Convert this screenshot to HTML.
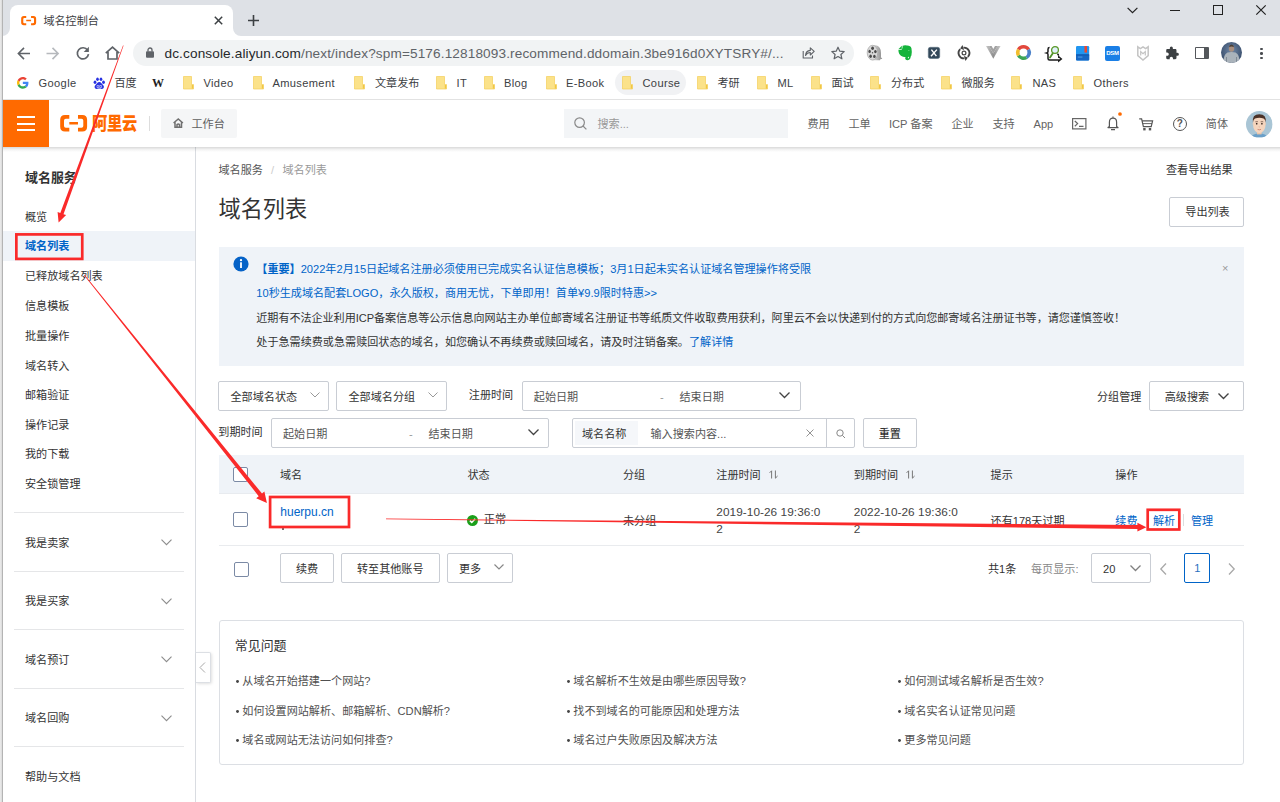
<!DOCTYPE html>
<html lang="zh-CN">
<head>
<meta charset="utf-8">
<title>域名控制台</title>
<style>
*{box-sizing:border-box;margin:0;padding:0}
html,body{width:1280px;height:802px;overflow:hidden;background:#fff}
body{position:relative;font-family:"Liberation Sans","Noto Sans CJK SC",sans-serif;font-size:11.1px;color:#333;-webkit-font-smoothing:antialiased}
.a{position:absolute;white-space:nowrap}
.t{position:absolute;white-space:nowrap;line-height:16px;height:16px;margin-top:0.5px}
svg{position:absolute;overflow:visible}
/* chrome */
#tabstrip{left:0;top:0;width:1280px;height:36px;background:#dee1e6}
#tab{left:10px;top:5px;width:223px;height:31px;background:#fff;border-radius:8px 8px 0 0}
#toolbar{left:0;top:36px;width:1280px;height:34px;background:#fff}
#omni{left:133px;top:40px;width:721px;height:26px;border-radius:13px;background:#f1f3f4}
#bm{left:0;top:70px;width:1280px;height:30px;background:#fff;border-bottom:1px solid #e2e2e2}
.bk{font-size:11.1px;color:#3c4043;top:75px}
.bk2{color:#3c4043}
#leftstrip{left:0;top:0;width:3px;height:802px;background:linear-gradient(90deg,#ececec,#dadada);border-right:1px solid #b4b4b4}
/* site header */
#hdr{left:3px;top:100px;width:1277px;height:47px;background:#fff}
#hsh{left:3px;top:147px;width:1277px;height:5px;background:linear-gradient(rgba(0,0,0,.15),rgba(0,0,0,.05) 50%,rgba(0,0,0,0))}
#burger{left:3px;top:100px;width:46px;height:46.8px;background:#ff6a00}
.nav{top:115px;color:#333}
/* sidebar */
#side{left:3px;top:147px;width:193px;height:655px;border-right:1px solid #d9dce1}
.mi{left:25px;color:#333}
.sep{left:14px;width:170px;height:1px;background:#e5e6e8}
/* content */
.inp{border:1px solid #c9cdd4;border-radius:2px;background:#fff}
.btn{border:1px solid #c9cdd4;border-radius:2px;background:#fff;text-align:center;color:#333}
.ph{color:#555}
.th{top:466px;color:#333}
.blue{color:#0064c8}
.faq{color:#505050}
.dt{font-size:11.8px;letter-spacing:0.06px;color:#444}
.cb{width:15px;height:15px;border:1px solid #7b8aa5;border-radius:2px;background:#fff}
</style>
</head>
<body>
<!-- ===== browser chrome ===== -->
<div class="a" id="tabstrip"></div>
<div class="a" id="tab"></div>
<div class="a" id="toolbar"></div>
<div class="a" id="omni"></div>
<div class="a" id="bm"></div>
<!--CHROME-->
<svg style="left:2px;top:28px" width="8" height="8" viewBox="0 0 8 8"><path d="M0 8H8V0A8 8 0 0 1 0 8Z" fill="#fff"/></svg>
<svg style="left:233px;top:28px" width="8" height="8" viewBox="0 0 8 8"><path d="M8 8H0V0A8 8 0 0 0 8 8Z" fill="#fff"/></svg>
<svg style="left:21px;top:15.8px" width="15.3" height="9.2" viewBox="0 0 31 19"><path d="M10.5 0H5.5Q0 0 0 5.5V13.5Q0 19 5.500000 19H10.5V14.8H6.5Q4.4 14.8 4.4 12.8V6.2Q4.4 4.2 6.5 4.2H10.5ZM20.5 0H25.5Q31 0 31 5.500000V13.5Q31 19 25.500000 19H20.5V14.8H24.5Q26.6 14.8 26.6 12.8V6.2Q26.6 4.2 24.5 4.2H20.5ZM10.500000 8H20.500000V11H10.500000Z" fill="#ff6a00"/></svg>
<div class="t " style="left:43.4px;top:12.6px;color:#3c4043">域名控制台</div>
<svg style="left:214px;top:16px" width="9" height="9" viewBox="0 0 9 9"><path d="M0.8 0.8L8.2 8.2M8.2 0.8L0.8 8.2" stroke="#3c4043" stroke-width="1.5" fill="none"/></svg>
<svg style="left:248px;top:14.5px" width="11" height="11" viewBox="0 0 11 11"><path d="M5.5 0V11M0 5.5H11" stroke="#3c4043" stroke-width="1.6" fill="none"/></svg>
<svg style="left:1127px;top:7px" width="11" height="7" viewBox="0 0 11 7"><path d="M0.6 0.8L5.5 5.700000L10.4 0.8" fill="none" stroke="#222" stroke-width="1.2"/></svg>
<div class="a" style="left:1170px;top:9.5px;width:10px;height:1px;background:#222"></div>
<div class="a" style="left:1213px;top:4.7px;width:10px;height:10.2px;border:1.1px solid #222"></div>
<svg style="left:1255.5px;top:5px" width="10" height="10" viewBox="0 0 10 10"><path d="M0.3 0.3L9.7 9.700000M9.700000 0.3L0.3 9.700000" stroke="#222" stroke-width="1.2" fill="none"/></svg>
<svg style="left:16.5px;top:46.5px" width="13.5" height="13" viewBox="0 0 13.5 13"><path d="M13 6.5H1.8M7 0.9L1.4 6.5L7 12.1" fill="none" stroke="#5f6368" stroke-width="1.6"/></svg>
<svg style="left:46px;top:46.5px" width="13.5" height="13" viewBox="0 0 13.5 13"><path d="M0.5 6.5H11.7M6.5 0.9L12.1 6.5L6.5 12.1" fill="none" stroke="#b6b9bd" stroke-width="1.6"/></svg>
<svg style="left:76px;top:46px" width="14" height="14" viewBox="0 0 14 14"><path d="M11.6 4.2A5.6 5.6 0 1 0 12.5 8.2" fill="none" stroke="#5f6368" stroke-width="1.7"/><path d="M12.9 0.8V6H7.7Z" fill="#5f6368"/></svg>
<svg style="left:104.5px;top:45.5px" width="15" height="14" viewBox="0 0 15 14"><path d="M0.8 7.2L7.5 1.2L14.2 7.2M3 6V13H12V6" fill="none" stroke="#5f6368" stroke-width="1.7"/></svg>
<svg style="left:145.5px;top:47px" width="8" height="11" viewBox="0 0 8 11"><rect x="0" y="4.3" width="8" height="6.5" rx="1" fill="#5f6368"/><path d="M2 4.5V3A2 2 0 0 1 6 3V4.5" fill="none" stroke="#5f6368" stroke-width="1.3"/></svg>
<div class="t" style="left:164.5px;top:45.1px;font-size:13.6px;color:#26282b;letter-spacing:0.13px" id="url">dc.console.aliyun.com<span style="color:#5f6368">/next/index?spm=5176.12818093.recommend.ddomain.3be916d0XYTSRY#/...</span></div>
<svg style="left:801px;top:46px" width="14" height="13" viewBox="0 0 14 13"><path d="M2.2 5V12H11.5V9.5M4.5 9.5C4.8 6.3 6.6 4.6 9.3 4.4V1.8L13.2 5.4L9.3 9V6.5C7.2 6.5 5.6 7.4 4.5 9.5Z" fill="none" stroke="#5f6368" stroke-width="1.1" stroke-linejoin="round"/></svg>
<svg style="left:830.5px;top:45.5px" width="14" height="14" viewBox="0 0 14 14"><path d="M7 1.2L8.8 5.2L13.2 5.6L9.9 8.5L10.9 12.8L7 10.5L3.1 12.8L4.1 8.5L0.8 5.6L5.2 5.2Z" fill="none" stroke="#5f6368" stroke-width="1.2" stroke-linejoin="round"/></svg>
<svg style="left:866.8px;top:45.2px" width="15.5" height="15.5" viewBox="0 0 15.5 15.5"><defs><linearGradient id="rg" x1="0" x2="1"><stop offset="0" stop-color="#e4e4e4"/><stop offset="1" stop-color="#8a8a8a"/></linearGradient></defs><path d="M5.4 0.2H8.6Q14 1.2 14 8V12.2L15.3 14H13.6L13 15.2H5.4Z" fill="url(#rg)"/><ellipse cx="5.5" cy="7.7" rx="5.3" ry="7.4" fill="#d9d9d9" stroke="#9b9b9b" stroke-width="0.6"/><ellipse cx="5.6" cy="3.3" rx="1.4" ry="1.7" fill="#4a4a4a"/><ellipse cx="2.6" cy="6.4" rx="1.2" ry="1.7" fill="#4a4a4a"/><ellipse cx="8.4" cy="6.6" rx="1.3" ry="1.7" fill="#4a4a4a"/><ellipse cx="3.6" cy="11.2" rx="1.3" ry="1.7" fill="#4a4a4a"/><ellipse cx="7.4" cy="11.4" rx="1.3" ry="1.7" fill="#4a4a4a"/><circle cx="5.5" cy="7.8" r="0.7" fill="#555"/></svg>
<svg style="left:897.5px;top:45.2px" width="14" height="15.2" viewBox="0 0 14 15.2"><path d="M4.600000 0.8Q7 -0.3 9 0.6Q12.600000 0.5 13.5 3.4Q14.2 7 13.4 10.4Q12.8 12 11.4 11.8Q8 12.6 5 11.8Q0.2 10.2 0.4 4.700000Q1.8 4.9 3.9 4.6Q4.8 2.600000 4.600000 0.8Z" fill="#14b43b"/><path d="M0.600000 4L3.9 0.8L3.7 4Z" fill="#14b43b"/><path d="M11.8 10.5Q12.2 14.3 9.5 14.4Q7.700000 14.3 8 13Q8.3 12.3 9.3 12.7" fill="none" stroke="#14b43b" stroke-width="1.6" stroke-linecap="round"/><path d="M10 5.600000Q11 5 11.600000 5.9Q10.8 5.700000 10 5.600000Z" fill="#d8f5df"/></svg>
<svg style="left:928.4px;top:46.8px" width="12" height="11.8" viewBox="0 0 12 11.8"><rect x="0.3" y="0.3" width="11.4" height="11.2" rx="2" fill="#33485a" stroke="#5a7080" stroke-width="0.6"/><path d="M3.4 2.6L8.4 9.2M8.9 2.6L3 9.2" stroke="#fff" stroke-width="1.4" fill="none"/></svg>
<svg style="left:957px;top:45.8px" width="14" height="14" viewBox="0 0 14 14"><path d="M3.18 3.18A5.4 5.4 0 0 0 7.47 12.38M10.82 10.82A5.4 5.4 0 0 0 6.53 1.62" fill="none" stroke="#454545" stroke-width="1.9"/><path d="M10.93 11.40L8.50 14.92L6.90 9.98ZM3.07 2.60L5.50 -0.92L7.10 4.02Z" fill="#454545"/><circle cx="7" cy="7" r="1.9" fill="none" stroke="#454545" stroke-width="1.2"/></svg>
<svg style="left:986.3px;top:46.1px" width="14.6" height="12.7" viewBox="0 0 14.6 12.7"><defs><linearGradient id="vg" x1="0" x2="1"><stop offset="0" stop-color="#c9c9c9"/><stop offset="0.5" stop-color="#8f8f8f"/><stop offset="1" stop-color="#c9c9c9"/></linearGradient></defs><path d="M0 0H3L7.3 7.4L11.6 0H14.6L7.3 12.7Z" fill="url(#vg)"/><path d="M3 0H5.6L7.3 2.900000L9 0H11.6L7.3 7.4Z" fill="#a2a2a2"/></svg>
<svg style="left:1016.1px;top:45.3px" width="15" height="15" viewBox="0 0 15 15"><path d="M7.5 7.5L1.00 3.75A7.5 7.5 0 0 1 14.00 3.75Z" fill="#e2483d"/><path d="M7.5 7.5L14.00 3.75A7.5 7.5 0 0 1 11.25 14.00Z" fill="#4a80c8"/><path d="M7.5 7.5L11.25 14.00A7.5 7.5 0 0 1 1.00 11.25Z" fill="#3da556"/><path d="M7.5 7.5L1.00 11.25A7.5 7.5 0 0 1 1.00 3.75Z" fill="#f2bd2c"/><circle cx="7.5" cy="7.5" r="3.9" fill="#fff"/></svg>
<svg style="left:1045.5px;top:45.5px" width="15.5" height="15" viewBox="0 0 15.5 15"><path d="M3.6 1.6Q2 1.6 2 3.2V5.4Q2 6.6 0.6 7Q2 7.4 2 8.6V12.4Q2 13.9 3.600000 13.9H12.8V15L15.3 12.9L12.8 10.8V11.900000" fill="none" stroke="#1c1c1c" stroke-width="1.5"/><path d="M12.4 9.6Q12.6 8.2 11.2 8" fill="none" stroke="#1c1c1c" stroke-width="1.5"/><path d="M7 7L4 11.600000" stroke="#4f8f2a" stroke-width="1.8" stroke-linecap="round"/><circle cx="9" cy="4" r="3.4" fill="#dff0fb" stroke="#5c9a2a" stroke-width="1.3"/></svg>
<svg style="left:1076.3px;top:45.6px" width="13.2" height="14.4" viewBox="0 0 13.2 14.4"><rect width="13.2" height="14.4" rx="1.2" fill="#2196f0"/><rect x="0" y="8.4" width="13.2" height="6" rx="1" fill="#1767c4"/><rect x="0" y="8.4" width="13.2" height="1" fill="#0f55ad"/><rect x="8.5" y="0" width="2.5" height="6.600000" fill="#f0452c"/><rect x="1.8" y="10.6" width="4.6" height="0.9" fill="#5aa5ea"/></svg>
<div class="a" style="left:1105px;top:45.5px;width:15px;height:15px;border-radius:2px;background:#1a7fe6;color:#fff;font-size:6px;font-weight:bold;line-height:15px;text-align:center;letter-spacing:-0.3px">DSM</div>
<svg style="left:1136.5px;top:45.5px" width="12" height="15" viewBox="0 0 12 15"><path d="M0.8 0.8L3.4 2.6L6 0.8L8.6 2.6L11.2 0.8V9.6L6 14L0.8 9.6Z" fill="none" stroke="#c4c4c4" stroke-width="1.5"/><path d="M3.7 9.5V5.5L6 7.6L8.3 5.5V9.5" fill="none" stroke="#c4c4c4" stroke-width="1.2"/></svg>
<svg style="left:1165px;top:45.5px" width="14.5" height="14.5" viewBox="0 0 24 24"><path d="M20.5 11H19V7c0-1.1-.9-2-2-2h-4V3.500000a2.500000 2.500000 0 0 0-5 0V5H4c-1.100000 0-1.990000.900000-1.990000 2v3.800000H3.500000c1.490000 0 2.700000 1.210000 2.700000 2.700000s-1.210000 2.700000-2.700000 2.700000H2V20c0 1.100000.900000 2 2 2h3.800000v-1.500000c0-1.490000 1.210000-2.700000 2.700000-2.700000 1.490000 0 2.700000 1.210000 2.700000 2.700000V22H17c1.100000 0 2-.900000 2-2v-4h1.500000a2.500000 2.500000 0 0 0 0-5z" fill="#3c4043"/></svg>
<div class="a" style="left:1195px;top:46.5px;width:13.5px;height:12.5px;border:1.6px solid #54575b;border-right-width:5px;border-radius:1px"></div>
<svg style="left:1221px;top:42.3px" width="21" height="21" viewBox="0 0 21 21"><defs><clipPath id="cav"><circle cx="10.5" cy="10.5" r="10.5"/></clipPath><radialGradient id="cbg" cx="0.5" cy="0.4" r="0.7"><stop offset="0" stop-color="#6f87a6"/><stop offset="1" stop-color="#2f4360"/></radialGradient></defs><g clip-path="url(#cav)"><rect width="21" height="21" fill="url(#cbg)"/><path d="M2.5 21Q2 13 6.500000 10.6Q10.5 9.2 14.5 10.600000Q19 13 18.5 21Z" fill="#aab3bb"/><path d="M5.5 21V15M15.5 21V15" stroke="#7f8a95" stroke-width="1"/><ellipse cx="10.5" cy="6.4" rx="2.7" ry="3.3" fill="#a98f7f"/><path d="M8 5.2Q8.2 2.6 10.500000 2.600000Q12.8 2.600000 13 5.200000Q10.500000 4 8 5.200000Z" fill="#4a4038"/></g></svg>
<div class="a" style="left:1260.3px;top:47.5px;width:2.7px;height:2.7px;border-radius:50%;background:#4a4d51"></div>
<div class="a" style="left:1260.3px;top:52.1px;width:2.7px;height:2.7px;border-radius:50%;background:#4a4d51"></div>
<div class="a" style="left:1260.3px;top:56.7px;width:2.7px;height:2.7px;border-radius:50%;background:#4a4d51"></div>
<svg style="left:17.3px;top:77px" width="11.7" height="11.7" viewBox="0 0 48 48"><path fill="#EA4335" d="M24 9.500000c3.540000 0 6.710000 1.220000 9.210000 3.600000l6.850000-6.850000C35.900000 2.380000 30.470000 0 24 0 14.620000 0 6.510000 5.380000 2.560000 13.220000l7.980000 6.190000C12.430000 13.720000 17.740000 9.500000 24 9.500000z"/><path fill="#4285F4" d="M46.980000 24.550000c0-1.570000-.150000-3.090000-.380000-4.550000H24v9.020000h12.940000c-.580000 2.960000-2.260000 5.480000-4.780000 7.180000l7.730000 6c4.510000-4.180000 7.090000-10.360000 7.090000-17.650000z"/><path fill="#FBBC05" d="M10.530000 28.590000c-.480000-1.450000-.760000-2.990000-.760000-4.590000s.270000-3.140000.760000-4.590000l-7.980000-6.190000C.920000 16.460000 0 20.120000 0 24c0 3.880000.920000 7.540000 2.560000 10.780000l7.970000-6.190000z"/><path fill="#34A853" d="M24 48c6.480000 0 11.930000-2.130000 15.890000-5.810000l-7.730000-6c-2.150000 1.450000-4.920000 2.300000-8.160000 2.300000-6.260000 0-11.570000-4.220000-13.470000-9.910000l-7.980000 6.190000C6.510000 42.620000 14.620000 48 24 48z"/></svg>
<div class="t bk2" style="left:38.6px;top:74.8px;letter-spacing:0.35px">Google</div>
<svg style="left:93px;top:76.5px" width="12.5" height="12.5" viewBox="0 0 25 25"><ellipse cx="4" cy="10.500000" rx="2.800000" ry="3.600000" fill="#2932e1"/><ellipse cx="9" cy="4.500000" rx="2.700000" ry="3.600000" fill="#2932e1"/><ellipse cx="16" cy="4.500000" rx="2.700000" ry="3.600000" fill="#2932e1"/><ellipse cx="21" cy="10.500000" rx="2.800000" ry="3.600000" fill="#2932e1"/><path d="M12.500000 10C16 10 18 14 20.500000 16.500000C23 19 22 23.500000 18 23.800000C15.500000 24 14.500000 23 12.500000 23C10.500000 23 9.500000 24 7 23.800000C3 23.500000 2 19 4.500000 16.500000C7 14 9 10 12.500000 10Z" fill="#2932e1"/><path d="M8 17h3.500000v4H8zM13.500000 17h3.500000v4h-3.500000z" fill="none" stroke="#fff" stroke-width="1"/></svg>
<div class="t bk2" style="left:114.4px;top:74.8px;">百度</div>
<div class="t " style="left:152.0px;top:74.8px;font-family:'Liberation Serif',serif;font-weight:bold;font-size:12px;color:#222">W</div>
<div class="a" style="left:614.5px;top:70px;width:71.2px;height:25.2px;border-radius:12.6px;background:#f1f2f4"></div>
<svg style="left:183.0px;top:75.8px" width="11" height="13.5" viewBox="0 0 11 13.5"><path d="M0.5 0.5H8.5V8.5H10.5V13H0.5Z" fill="#fbe28a" stroke="#f3cf5a" stroke-width="0.7"/><rect x="8.8" y="9" width="1.4" height="3.6" fill="#f1c644"/></svg>
<div class="t bk2" style="left:203.5px;top:74.8px;letter-spacing:0.35px">Video</div>
<svg style="left:252.5px;top:75.8px" width="11" height="13.5" viewBox="0 0 11 13.5"><path d="M0.5 0.5H8.5V8.5H10.5V13H0.5Z" fill="#fbe28a" stroke="#f3cf5a" stroke-width="0.7"/><rect x="8.8" y="9" width="1.4" height="3.6" fill="#f1c644"/></svg>
<div class="t bk2" style="left:272.5px;top:74.8px;letter-spacing:0.35px">Amusement</div>
<svg style="left:354.0px;top:75.8px" width="11" height="13.5" viewBox="0 0 11 13.5"><path d="M0.5 0.5H8.5V8.5H10.5V13H0.5Z" fill="#fbe28a" stroke="#f3cf5a" stroke-width="0.7"/><rect x="8.8" y="9" width="1.4" height="3.6" fill="#f1c644"/></svg>
<div class="t bk2" style="left:375.0px;top:74.8px;">文章发布</div>
<svg style="left:436.0px;top:75.8px" width="11" height="13.5" viewBox="0 0 11 13.5"><path d="M0.5 0.5H8.5V8.5H10.5V13H0.5Z" fill="#fbe28a" stroke="#f3cf5a" stroke-width="0.7"/><rect x="8.8" y="9" width="1.4" height="3.6" fill="#f1c644"/></svg>
<div class="t bk2" style="left:456.5px;top:74.8px;letter-spacing:0.35px">IT</div>
<svg style="left:483.5px;top:75.8px" width="11" height="13.5" viewBox="0 0 11 13.5"><path d="M0.5 0.5H8.5V8.5H10.5V13H0.5Z" fill="#fbe28a" stroke="#f3cf5a" stroke-width="0.7"/><rect x="8.8" y="9" width="1.4" height="3.6" fill="#f1c644"/></svg>
<div class="t bk2" style="left:504.0px;top:74.8px;letter-spacing:0.35px">Blog</div>
<svg style="left:546.0px;top:75.8px" width="11" height="13.5" viewBox="0 0 11 13.5"><path d="M0.5 0.5H8.5V8.5H10.5V13H0.5Z" fill="#fbe28a" stroke="#f3cf5a" stroke-width="0.7"/><rect x="8.8" y="9" width="1.4" height="3.6" fill="#f1c644"/></svg>
<div class="t bk2" style="left:566.0px;top:74.8px;letter-spacing:0.35px">E-Book</div>
<svg style="left:621.5px;top:75.8px" width="11" height="13.5" viewBox="0 0 11 13.5"><path d="M0.5 0.5H8.5V8.5H10.5V13H0.5Z" fill="#fbe28a" stroke="#f3cf5a" stroke-width="0.7"/><rect x="8.8" y="9" width="1.4" height="3.6" fill="#f1c644"/></svg>
<div class="t bk2" style="left:642.5px;top:74.8px;letter-spacing:0.35px">Course</div>
<svg style="left:696.5px;top:75.8px" width="11" height="13.5" viewBox="0 0 11 13.5"><path d="M0.5 0.5H8.5V8.5H10.5V13H0.5Z" fill="#fbe28a" stroke="#f3cf5a" stroke-width="0.7"/><rect x="8.8" y="9" width="1.4" height="3.6" fill="#f1c644"/></svg>
<div class="t bk2" style="left:717.5px;top:74.8px;">考研</div>
<svg style="left:756.5px;top:75.8px" width="11" height="13.5" viewBox="0 0 11 13.5"><path d="M0.5 0.5H8.5V8.5H10.5V13H0.5Z" fill="#fbe28a" stroke="#f3cf5a" stroke-width="0.7"/><rect x="8.8" y="9" width="1.4" height="3.6" fill="#f1c644"/></svg>
<div class="t bk2" style="left:777.5px;top:74.8px;letter-spacing:0.35px">ML</div>
<svg style="left:811.0px;top:75.8px" width="11" height="13.5" viewBox="0 0 11 13.5"><path d="M0.5 0.5H8.5V8.5H10.5V13H0.5Z" fill="#fbe28a" stroke="#f3cf5a" stroke-width="0.7"/><rect x="8.8" y="9" width="1.4" height="3.6" fill="#f1c644"/></svg>
<div class="t bk2" style="left:831.5px;top:74.8px;">面试</div>
<svg style="left:870.0px;top:75.8px" width="11" height="13.5" viewBox="0 0 11 13.5"><path d="M0.5 0.5H8.5V8.5H10.5V13H0.5Z" fill="#fbe28a" stroke="#f3cf5a" stroke-width="0.7"/><rect x="8.8" y="9" width="1.4" height="3.6" fill="#f1c644"/></svg>
<div class="t bk2" style="left:891.0px;top:74.8px;">分布式</div>
<svg style="left:941.0px;top:75.8px" width="11" height="13.5" viewBox="0 0 11 13.5"><path d="M0.5 0.5H8.5V8.5H10.5V13H0.5Z" fill="#fbe28a" stroke="#f3cf5a" stroke-width="0.7"/><rect x="8.8" y="9" width="1.4" height="3.6" fill="#f1c644"/></svg>
<div class="t bk2" style="left:961.5px;top:74.8px;">微服务</div>
<svg style="left:1011.0px;top:75.8px" width="11" height="13.5" viewBox="0 0 11 13.5"><path d="M0.5 0.5H8.5V8.5H10.5V13H0.5Z" fill="#fbe28a" stroke="#f3cf5a" stroke-width="0.7"/><rect x="8.8" y="9" width="1.4" height="3.6" fill="#f1c644"/></svg>
<div class="t bk2" style="left:1032.5px;top:74.8px;letter-spacing:0.35px">NAS</div>
<svg style="left:1072.5px;top:75.8px" width="11" height="13.5" viewBox="0 0 11 13.5"><path d="M0.5 0.5H8.5V8.5H10.5V13H0.5Z" fill="#fbe28a" stroke="#f3cf5a" stroke-width="0.7"/><rect x="8.8" y="9" width="1.4" height="3.6" fill="#f1c644"/></svg>
<div class="t bk2" style="left:1093.5px;top:74.8px;letter-spacing:0.35px">Others</div>
<!--/CHROME-->
<!-- ===== site header ===== -->
<div class="a" id="hdr"></div>
<div class="a" id="burger"></div>
<!--HEADER-->
<div class="a" style="left:16.8px;top:116.1px;width:18.5px;height:1.9px;background:#fff"></div>
<div class="a" style="left:16.8px;top:122.7px;width:18.5px;height:1.9px;background:#fff"></div>
<div class="a" style="left:16.8px;top:129.2px;width:18.5px;height:1.9px;background:#fff"></div>
<svg style="left:60.2px;top:115.2px" width="27.3" height="16.5" viewBox="0 0 31 19"><path d="M10.5 0H5.5Q0 0 0 5.5V13.5Q0 19 5.500000 19H10.5V14.8H6.5Q4.4 14.8 4.4 12.8V6.2Q4.4 4.2 6.5 4.2H10.5ZM20.5 0H25.5Q31 0 31 5.500000V13.5Q31 19 25.500000 19H20.5V14.8H24.5Q26.6 14.8 26.6 12.8V6.2Q26.6 4.2 24.5 4.2H20.5ZM10.500000 8H20.500000V11H10.500000Z" fill="#ff6a00"/></svg>
<div class="a" style="left:92px;top:110.4px;font-size:15.2px;font-weight:900;line-height:24px;color:#ff6a00;letter-spacing:-0.2px;font-family:'Noto Sans CJK SC',sans-serif;transform:scaleY(1.17);transform-origin:50% 50%">阿里云</div>
<div class="a" style="left:149px;top:116px;width:1px;height:15px;background:#ddd"></div>
<div class="a" style="left:161px;top:109px;width:76px;height:29px;background:#f5f6f7;border-radius:2px"></div>
<svg style="left:172.5px;top:118px" width="10.5" height="10" viewBox="0 0 10.5 10"><path d="M0.6 5L5.25 0.9L9.9 5M2 4.2V9.3H8.5V4.2M4 9.3V6.600000Q5.25 5.4 6.5 6.600000V9.3" fill="none" stroke="#707070" stroke-width="1.5"/></svg>
<div class="t " style="left:191.5px;top:115.0px;color:#606060">工作台</div>
<div class="a" style="left:564px;top:109px;width:223.5px;height:29px;background:#f3f5f7"></div>
<svg style="left:574px;top:117px" width="13" height="13" viewBox="0 0 13 13"><circle cx="5.600000" cy="5.600000" r="4.8" fill="none" stroke="#8a8a8a" stroke-width="1.2"/><path d="M9 9L12.4 12.4" stroke="#8a8a8a" stroke-width="1.2"/></svg>
<div class="t " style="left:597.5px;top:115.0px;color:#999">搜索...</div>
<div class="t " style="left:807.5px;top:115.0px;color:#636363">费用</div>
<div class="t " style="left:848.5px;top:115.0px;color:#636363">工单</div>
<div class="t " style="left:889.0px;top:115.0px;color:#636363">ICP 备案</div>
<div class="t " style="left:951.5px;top:115.0px;color:#636363">企业</div>
<div class="t " style="left:992.5px;top:115.0px;color:#636363">支持</div>
<div class="t " style="left:1033.5px;top:115.0px;color:#636363">App</div>
<div class="t " style="left:1205.8px;top:115.0px;color:#636363">简体</div>
<svg style="left:1072px;top:118px" width="14.5" height="11.5" viewBox="0 0 14.5 11.5"><rect x="0.6" y="0.6" width="13.3" height="10.3" fill="none" stroke="#666" stroke-width="1.2"/><path d="M2.8 3L5.6 5.600000L2.8 8.2M7 8.4H11.5" fill="none" stroke="#666" stroke-width="1.2"/></svg>
<svg style="left:1107px;top:116.3px" width="12" height="14.5" viewBox="0 0 12 14.5"><path d="M6 0.6V2M2.4 10.6V6.2Q2.4 2.2 6 2.2Q9.6 2.2 9.6 6.2V10.6L11 11.6H1ZM4 13.6H8" fill="none" stroke="#555" stroke-width="1.2" stroke-linejoin="round"/></svg>
<svg style="left:1118px;top:111.500000px" width="4" height="4" viewBox="0 0 4 4"><circle cx="2" cy="2" r="1.85" fill="#ff6a00"/></svg>
<svg style="left:1139px;top:117.6px" width="14.5" height="13" viewBox="0 0 14.5 13"><path d="M0.2 0.8H2.6L4.4 8.6H12.2L13.600000 2.8H3.2" fill="none" stroke="#555" stroke-width="1.2"/><path d="M4 5.6H13" stroke="#555" stroke-width="0.9"/><rect x="4.2" y="10" width="2.4" height="2.4" fill="#555"/><rect x="9.8" y="10" width="2.4" height="2.4" fill="#555"/></svg>
<div class="a" style="left:1172.8px;top:116.800000px;width:14px;height:14px;border-radius:50%;border:1.2px solid #555;text-align:center;line-height:11.600000px;font-size:10px;font-weight:bold;color:#555">?</div>
<svg style="left:1246.3px;top:111px" width="26.6" height="26.6" viewBox="0 0 26.6 26.6"><defs><clipPath id="avc"><circle cx="13.3" cy="13.3" r="13.3"/></clipPath></defs><g clip-path="url(#avc)"><rect width="26.6" height="26.6" fill="#a9c5d5"/><path d="M5 26.6Q6.500000 22.6 13.3 22.6Q20 22.6 21.600000 26.6Z" fill="#6a9fc8"/><rect x="11" y="19" width="4.600000" height="4.4" fill="#ebc5a8"/><path d="M6.8 11.5Q6.2 13.8 7.4 14.6L7.4 11.5ZM19.8 11.5Q20.4 13.8 19.2 14.600000L19.2 11.500000Z" fill="#ebc5a8"/><path d="M7.2 10Q7.2 4.6 13.3 4.600000Q19.4 4.600000 19.4 10V14.5Q19.4 18.5 16.2 21Q13.3 22.8 10.4 21Q7.2 18.500000 7.2 14.500000Z" fill="#f5d5be"/><path d="M6.9 11.6Q5.8 3.2 13.3 3.2Q20.8 3.2 19.7 11.600000Q19.4 8.4 17.600000 7.4Q13.3 6.2 9 7.400000Q7.2 8.400000 6.900000 11.600000Z" fill="#4b3228"/><ellipse cx="10.7" cy="12.7" rx="0.8" ry="0.9" fill="#3a2a22"/><ellipse cx="15.9" cy="12.7" rx="0.800000" ry="0.900000" fill="#3a2a22"/><path d="M9.3 10.8Q10.7 10.2 12 10.800000M14.600000 10.800000Q15.9 10.200000 17.3 10.800000" fill="none" stroke="#5a4035" stroke-width="0.6"/><path d="M12.8 15.8Q13.3 16.2 13.8 15.800000" fill="none" stroke="#c99a82" stroke-width="0.6"/><path d="M11.600000 18.4Q13.3 19.2 15 18.400000" fill="none" stroke="#c0705f" stroke-width="0.7"/></g></svg>
<!--/HEADER-->
<!-- ===== sidebar ===== -->
<div class="a" id="side"></div>
<!--SIDEBAR-->
<div class="a" style="left:3px;top:231px;width:192px;height:30px;background:#eff3f8"></div>
<div class="t" style="left:25px;top:169.5px;font-size:12.95px;font-weight:bold;color:#333">域名服务</div>
<div class="t mi" style="top:208.0px">概览</div>
<div class="t mi" style="top:237.8px;font-weight:bold;color:#0064c8">域名列表</div>
<div class="t mi" style="top:267.6px">已释放域名列表</div>
<div class="t mi" style="top:297.8px">信息模板</div>
<div class="t mi" style="top:327.4px">批量操作</div>
<div class="t mi" style="top:357.0px">域名转入</div>
<div class="t mi" style="top:386.6px">邮箱验证</div>
<div class="t mi" style="top:416.2px">操作记录</div>
<div class="t mi" style="top:445.8px">我的下载</div>
<div class="t mi" style="top:475.4px">安全锁管理</div>
<div class="a sep" style="top:511.5px"></div>
<div class="a sep" style="top:570.5px"></div>
<div class="a sep" style="top:628.9px"></div>
<div class="a sep" style="top:687.5px"></div>
<div class="a sep" style="top:745.8px"></div>
<div class="t mi" style="top:534.2px">我是卖家</div>
<svg style="left:161px;top:539.2px" width="11" height="7" viewBox="0 0 11 7"><path d="M0.5 0.7 L5.5 5.7 L10.5 0.7" fill="none" stroke="#8c8c8c" stroke-width="1.1"/></svg>
<div class="t mi" style="top:592.5px">我是买家</div>
<svg style="left:161px;top:597.5px" width="11" height="7" viewBox="0 0 11 7"><path d="M0.5 0.7 L5.5 5.7 L10.5 0.7" fill="none" stroke="#8c8c8c" stroke-width="1.1"/></svg>
<div class="t mi" style="top:651.0px">域名预订</div>
<svg style="left:161px;top:656.0px" width="11" height="7" viewBox="0 0 11 7"><path d="M0.5 0.7 L5.5 5.7 L10.5 0.7" fill="none" stroke="#8c8c8c" stroke-width="1.1"/></svg>
<div class="t mi" style="top:709.8px">域名回购</div>
<svg style="left:161px;top:714.8px" width="11" height="7" viewBox="0 0 11 7"><path d="M0.5 0.7 L5.5 5.7 L10.5 0.7" fill="none" stroke="#8c8c8c" stroke-width="1.1"/></svg>
<div class="t mi" style="top:768.4px">帮助与文档</div>
<!--/SIDEBAR-->
<!-- ===== content ===== -->
<!--CONTENT-->
<div class="t " style="left:218.5px;top:161.5px;color:#555">域名服务</div>
<div class="t " style="left:271.0px;top:161.5px;color:#ccc">/</div>
<div class="t " style="left:282.5px;top:161.5px;color:#999">域名列表</div>
<div class="t " style="left:1166.0px;top:161.8px;color:#333">查看导出结果</div>
<div class="a" style="left:218.5px;top:193.8px;font-size:22.2px;line-height:32px;color:#333">域名列表</div>
<div class="a btn" style="left:1169px;top:197px;width:75px;height:30px;line-height:29.5px;padding-left:2px">导出列表</div>
<div class="a" style="left:218.5px;top:247.3px;width:1025.5px;height:118.6px;background:#eff3f8"></div>
<svg style="left:233px;top:256px" width="16" height="16" viewBox="0 0 16 16"><circle cx="8" cy="8" r="7.6" fill="#0562c7"/><circle cx="8" cy="4.2" r="1.15" fill="#fff"/><rect x="7.1" y="6.3" width="1.8" height="5.7" fill="#fff"/></svg>
<div class="t l1" style="left:256.3px;top:260.8px;color:#0064c8"><b>【重要】</b>2022年2月15日起域名注册必须使用已完成实名认证信息模板；3月1日起未实名认证域名管理操作将受限</div>
<div class="t l2" style="left:256.3px;top:284.5px;color:#0064c8">10秒生成域名配套LOGO，永久版权，商用无忧，下单即用！首单¥9.9限时特惠&gt;&gt;</div>
<div class="t l3" style="left:256.3px;top:309.0px;color:#333;letter-spacing:-0.05px">近期有不法企业利用ICP备案信息等公示信息向网站主办单位邮寄域名注册证书等纸质文件收取费用获利，阿里云不会以快递到付的方式向您邮寄域名注册证书等，请您谨慎签收！</div>
<div class="t l4" style="left:256.3px;top:333.2px;color:#333">处于急需续费或急需赎回状态的域名，如您确认不再续费或赎回域名，请及时注销备案。<span class="blue">了解详情</span></div>
<div class="t " style="left:1222.0px;top:259.3px;color:#999;font-size:11px">×</div>
<div class="a inp" style="left:218px;top:381px;width:111px;height:30px"></div>
<div class="t " style="left:230.5px;top:388.8px;">全部域名状态</div>
<svg style="left:310.0px;top:392.3px" width="10.0" height="6.0" viewBox="0 0 10.0 6.0"><path d="M0.5 0.5 L5.0 5.0 L9.5 0.5" fill="none" stroke="#999" stroke-width="1.0"/></svg>
<div class="a inp" style="left:336px;top:381px;width:111px;height:30px"></div>
<div class="t " style="left:348.5px;top:388.8px;">全部域名分组</div>
<svg style="left:428.0px;top:392.3px" width="10.0" height="6.0" viewBox="0 0 10.0 6.0"><path d="M0.5 0.5 L5.0 5.0 L9.5 0.5" fill="none" stroke="#999" stroke-width="1.0"/></svg>
<div class="t " style="left:468.8px;top:386.5px;">注册时间</div>
<div class="a inp" style="left:521.5px;top:381px;width:279px;height:30px"></div>
<div class="t ph" style="left:533.8px;top:388.8px;">起始日期</div>
<div class="t " style="left:660.0px;top:388.0px;color:#999">-</div>
<div class="t ph" style="left:679.5px;top:388.8px;">结束日期</div>
<svg style="left:778.5px;top:392.4px" width="11.0" height="6.5" viewBox="0 0 11.0 6.5"><path d="M0.5 0.5 L5.5 5.5 L10.5 0.5" fill="none" stroke="#444" stroke-width="1.3"/></svg>
<div class="t " style="left:1097.0px;top:388.5px;">分组管理</div>
<div class="a btn" style="left:1149px;top:381px;width:95px;height:30px"></div>
<div class="t " style="left:1164.7px;top:388.8px;">高级搜索</div>
<svg style="left:1217.5px;top:392.7px" width="11.0" height="6.5" viewBox="0 0 11.0 6.5"><path d="M0.5 0.5 L5.5 5.5 L10.5 0.5" fill="none" stroke="#444" stroke-width="1.4"/></svg>
<div class="t " style="left:218.3px;top:423.0px;">到期时间</div>
<div class="a inp" style="left:270.5px;top:418px;width:278.5px;height:30px"></div>
<div class="t ph" style="left:283.0px;top:425.8px;">起始日期</div>
<div class="t " style="left:409.0px;top:425.0px;color:#999">-</div>
<div class="t ph" style="left:428.5px;top:425.8px;">结束日期</div>
<svg style="left:528.0px;top:429.4px" width="11.0" height="6.5" viewBox="0 0 11.0 6.5"><path d="M0.5 0.5 L5.5 5.5 L10.5 0.5" fill="none" stroke="#444" stroke-width="1.3"/></svg>
<div class="a inp" style="left:572px;top:418px;width:283px;height:30px"></div>
<div class="a" style="left:575px;top:421px;width:62.5px;height:24px;background:#f5f7fa"></div>
<div class="t " style="left:582.0px;top:425.8px;">域名名称</div>
<div class="t ph" style="left:650.5px;top:425.8px;">输入搜索内容...</div>
<svg style="left:806px;top:429px" width="8" height="8" viewBox="0 0 8 8"><path d="M0.5 0.5L7.5 7.5M7.5 0.5L0.5 7.5" stroke="#888" stroke-width="0.9" fill="none"/></svg>
<div class="a" style="left:825.5px;top:418px;width:1px;height:30px;background:#c9cdd4"></div>
<svg style="left:835.5px;top:428.5px" width="10" height="10" viewBox="0 0 10 10"><circle cx="4" cy="4" r="3.2" fill="none" stroke="#888" stroke-width="1"/><path d="M6.4 6.4L9 9" stroke="#888" stroke-width="1"/></svg>
<div class="a btn" style="left:863px;top:418px;width:53.5px;height:30px;line-height:30px;font-weight:500;color:#333">重置</div>
<div class="a" style="left:218.5px;top:455px;width:1025.5px;height:38px;background:#eff3f8"></div>
<div class="a" style="left:218.5px;top:493px;width:1025.5px;height:1px;background:#e8ebef"></div>
<div class="a" style="left:218.5px;top:544.6px;width:1025.5px;height:1px;background:#e9ebee"></div>
<div class="a cb" style="left:233px;top:467px"></div>
<div class="a cb" style="left:233px;top:512px"></div>
<div class="a cb" style="left:234px;top:562px"></div>
<div class="t " style="left:280.0px;top:466.5px;">域名</div>
<div class="t " style="left:467.5px;top:466.5px;">状态</div>
<div class="t " style="left:623.0px;top:466.5px;">分组</div>
<div class="t " style="left:716.3px;top:466.5px;">注册时间</div>
<div class="t " style="left:853.8px;top:466.5px;">到期时间</div>
<div class="t " style="left:990.6px;top:466.5px;">提示</div>
<div class="t " style="left:1115.3px;top:466.5px;">操作</div>
<svg style="left:768.5px;top:470px" width="10" height="9" viewBox="0 0 10 9"><path d="M2.6 8.5V0.8L0.6 2.8M6.4 0.5V8.2L8.6 6" fill="none" stroke="#777" stroke-width="1"/></svg>
<svg style="left:905.5px;top:470px" width="10" height="9" viewBox="0 0 10 9"><path d="M2.6 8.5V0.8L0.6 2.8M6.4 0.5V8.2L8.6 6" fill="none" stroke="#777" stroke-width="1"/></svg>
<div class="t " style="left:280.3px;top:503.0px;color:#0064c8;font-size:12px">huerpu.cn</div>
<div class="a" style="left:282px;top:527.8px;width:2px;height:2px;background:#444;border-radius:1px"></div>
<svg style="left:467px;top:514.5px" width="11" height="11" viewBox="0 0 11 11"><circle cx="5.5" cy="5.5" r="5.5" fill="#1aa01a"/><path d="M2.9 5.6L4.8 7.4L8.2 3.8" fill="none" stroke="#fff" stroke-width="1.5"/></svg>
<div class="t " style="left:483.8px;top:510.7px;">正常</div>
<div class="t " style="left:623.0px;top:512.6px;">未分组</div>
<div class="t dt" style="left:716.3px;top:503.3px;">2019-10-26 19:36:0</div>
<div class="t dt" style="left:716.3px;top:520.8px;">2</div>
<div class="t dt" style="left:853.8px;top:503.3px;">2022-10-26 19:36:0</div>
<div class="t dt" style="left:853.8px;top:520.8px;">2</div>
<div class="t " style="left:990.6px;top:512.0px;">还有178天过期</div>
<div class="t blue" style="left:1115.3px;top:512.0px;">续费</div>
<div class="t blue" style="left:1153.0px;top:512.0px;">解析</div>
<div class="a" style="left:1183px;top:514px;width:1px;height:12px;background:#ddd"></div>
<div class="t blue" style="left:1191.0px;top:512.0px;">管理</div>
<div class="a btn" style="left:280px;top:553px;width:54px;height:30px;line-height:30px">续费</div>
<div class="a btn" style="left:341px;top:553px;width:98.5px;height:30px;line-height:30px">转至其他账号</div>
<div class="a btn" style="left:447px;top:553px;width:66px;height:30px"></div>
<div class="t " style="left:459.0px;top:560.7px;">更多</div>
<svg style="left:494.0px;top:564.3px" width="10.0" height="6.0" viewBox="0 0 10.0 6.0"><path d="M0.5 0.5 L5.0 5.0 L9.5 0.5" fill="none" stroke="#888" stroke-width="1.2"/></svg>
<div class="t " style="left:988.0px;top:560.8px;color:#333">共1条</div>
<div class="t " style="left:1031.0px;top:560.8px;color:#888">每页显示:</div>
<div class="a inp" style="left:1091px;top:553px;width:59.6px;height:29.6px"></div>
<div class="t " style="left:1103.0px;top:560.5px;">20</div>
<svg style="left:1129.5px;top:564.8px" width="11.0" height="6.5" viewBox="0 0 11.0 6.5"><path d="M0.5 0.5 L5.5 5.5 L10.5 0.5" fill="none" stroke="#808080" stroke-width="1.3"/></svg>
<svg style="left:1160px;top:562.5px" width="7" height="12" viewBox="0 0 7 12"><path d="M6 0.5L0.8 6L6 11.5" fill="none" stroke="#a8a8a8" stroke-width="1.3"/></svg>
<div class="a" style="left:1184.4px;top:553.3px;width:26px;height:29.6px;border:1px solid #0064c8;border-radius:2px;text-align:center;line-height:29px;color:#2a6fc0">1</div>
<svg style="left:1228px;top:562.5px" width="7" height="12" viewBox="0 0 7 12"><path d="M1 0.5L6.2 6L1 11.5" fill="none" stroke="#a8a8a8" stroke-width="1.3"/></svg>
<div class="a" style="left:218.5px;top:620px;width:1025.5px;height:145px;border:1px solid #dcdfe4;border-radius:3px;background:#fff"></div>
<div class="a" style="left:234.8px;top:636px;font-size:12.95px;line-height:20px;color:#333">常见问题</div>
<svg style="left:235.9px;top:680.0px" width="3" height="3" viewBox="0 0 3 3"><circle cx="1.5" cy="1.5" r="1.45" fill="#444"/></svg>
<div class="t faq" style="left:242.3px;top:672.4px;">从域名开始搭建一个网站?</div>
<svg style="left:235.9px;top:709.7px" width="3" height="3" viewBox="0 0 3 3"><circle cx="1.5" cy="1.5" r="1.45" fill="#444"/></svg>
<div class="t faq" style="left:242.3px;top:702.1px;">如何设置网站解析、邮箱解析、CDN解析?</div>
<svg style="left:235.9px;top:739.4px" width="3" height="3" viewBox="0 0 3 3"><circle cx="1.5" cy="1.5" r="1.45" fill="#444"/></svg>
<div class="t faq" style="left:242.3px;top:731.8px;">域名或网站无法访问如何排查?</div>
<svg style="left:566.9px;top:680.0px" width="3" height="3" viewBox="0 0 3 3"><circle cx="1.5" cy="1.5" r="1.45" fill="#444"/></svg>
<div class="t faq" style="left:573.3px;top:672.4px;">域名解析不生效是由哪些原因导致?</div>
<svg style="left:566.9px;top:709.7px" width="3" height="3" viewBox="0 0 3 3"><circle cx="1.5" cy="1.5" r="1.45" fill="#444"/></svg>
<div class="t faq" style="left:573.3px;top:702.1px;">找不到域名的可能原因和处理方法</div>
<svg style="left:566.9px;top:739.4px" width="3" height="3" viewBox="0 0 3 3"><circle cx="1.5" cy="1.5" r="1.45" fill="#444"/></svg>
<div class="t faq" style="left:573.3px;top:731.8px;">域名过户失败原因及解决方法</div>
<svg style="left:897.9px;top:680.0px" width="3" height="3" viewBox="0 0 3 3"><circle cx="1.5" cy="1.5" r="1.45" fill="#444"/></svg>
<div class="t faq" style="left:904.3px;top:672.4px;">如何测试域名解析是否生效?</div>
<svg style="left:897.9px;top:709.7px" width="3" height="3" viewBox="0 0 3 3"><circle cx="1.5" cy="1.5" r="1.45" fill="#444"/></svg>
<div class="t faq" style="left:904.3px;top:702.1px;">域名实名认证常见问题</div>
<svg style="left:897.9px;top:739.4px" width="3" height="3" viewBox="0 0 3 3"><circle cx="1.5" cy="1.5" r="1.45" fill="#444"/></svg>
<div class="t faq" style="left:904.3px;top:731.8px;">更多常见问题</div>
<div class="a" style="left:196px;top:651.5px;width:15px;height:31px;background:#fff;border:1px solid #dcdfe4;border-left:none;border-radius:0 2px 2px 0;box-shadow:1px 1px 3px rgba(0,0,0,.12)"></div>
<svg style="left:199px;top:661.5px" width="7" height="11" viewBox="0 0 7 11"><path d="M6 0.5L1 5.5L6 10.5" fill="none" stroke="#aaa" stroke-width="1"/></svg>
<!--/CONTENT-->
<!-- ===== annotations ===== -->
<!--ANNOT-->
<svg style="left:0;top:0" width="1280" height="802" viewBox="0 0 1280 802"><polygon points="123.0,45.4 60.3,213.0 57.6,212.0 58.6,222.5 66.1,215.1 63.5,214.2 123.6,45.6" fill="#fa2a2a"/><polygon points="84.0,275.2 258.7,496.2 256.2,498.2 266.9,503.1 264.4,491.6 262.0,493.6 84.6,274.8" fill="#fa2a2a"/><polygon points="386.0,519.2 1137.4,529.1 1137.4,531.4 1146.4,527.2 1137.4,522.8 1137.4,525.1 386.0,518.6" fill="#fa2a2a"/><rect x="16.35" y="234.4" width="65.9" height="24.5" fill="none" stroke="#fa2a2a" stroke-width="2.7"/><rect x="270.1" y="497" width="78.9" height="30" fill="none" stroke="#fa2a2a" stroke-width="2.7"/><rect x="1147.7" y="509.8" width="31.6" height="19.7" fill="none" stroke="#fa2a2a" stroke-width="2.7"/></svg>
<!--/ANNOT-->
<div class="a" id="hsh"></div>
<div class="a" id="leftstrip"></div>
</body>
</html>
